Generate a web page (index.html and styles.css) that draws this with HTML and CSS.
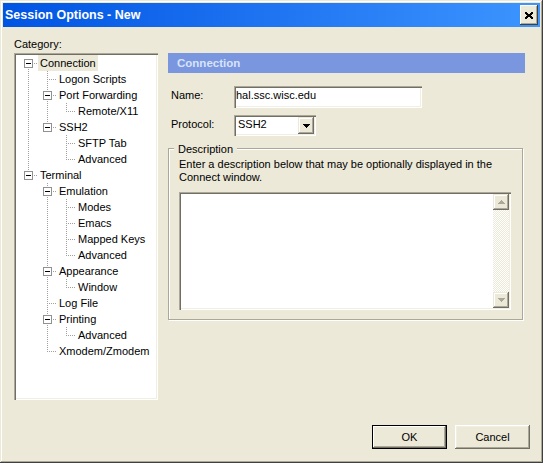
FILE: index.html
```html
<!DOCTYPE html>
<html>
<head>
<meta charset="utf-8">
<link rel="stylesheet" href="styles.css">
</head>
<body>
<div class="window">
  <div class="titlebar">
    <span class="title">Session Options - New</span>
    <span class="close"><svg width="8" height="7" viewBox="0 0 8 7" shape-rendering="crispEdges"><path fill="#000" d="M0 0h2v1H0zM6 0h2v1H6zM0 1h3v1H0zM5 1h3v1H5zM1 2h6v1H1zM2 3h4v1H2zM1 4h6v1H1zM0 5h3v1H0zM5 5h3v1H5zM0 6h2v1H0zM6 6h2v1H6z"/></svg></span>
  </div>
  <div class="content">
    <div class="left">
      <div class="cat-label">Category:</div>
      <div class="tree">
        <div class="row"><span class="g f"><i class="box"></i></span><span class="lbl sel">Connection</span></div>
        <div class="row"><span class="g v"></span><span class="g t"></span><span class="lbl">Logon Scripts</span></div>
        <div class="row"><span class="g v"></span><span class="g t"><i class="box"></i></span><span class="lbl">Port Forwarding</span></div>
        <div class="row"><span class="g v"></span><span class="g v"></span><span class="g l"></span><span class="lbl">Remote/X11</span></div>
        <div class="row"><span class="g v"></span><span class="g l"><i class="box"></i></span><span class="lbl">SSH2</span></div>
        <div class="row"><span class="g v"></span><span class="g n"></span><span class="g t"></span><span class="lbl">SFTP Tab</span></div>
        <div class="row"><span class="g v"></span><span class="g n"></span><span class="g l"></span><span class="lbl">Advanced</span></div>
        <div class="row"><span class="g l"><i class="box"></i></span><span class="lbl">Terminal</span></div>
        <div class="row"><span class="g n"></span><span class="g t"><i class="box"></i></span><span class="lbl">Emulation</span></div>
        <div class="row"><span class="g n"></span><span class="g v"></span><span class="g t"></span><span class="lbl">Modes</span></div>
        <div class="row"><span class="g n"></span><span class="g v"></span><span class="g t"></span><span class="lbl">Emacs</span></div>
        <div class="row"><span class="g n"></span><span class="g v"></span><span class="g t"></span><span class="lbl">Mapped Keys</span></div>
        <div class="row"><span class="g n"></span><span class="g v"></span><span class="g l"></span><span class="lbl">Advanced</span></div>
        <div class="row"><span class="g n"></span><span class="g t"><i class="box"></i></span><span class="lbl">Appearance</span></div>
        <div class="row"><span class="g n"></span><span class="g v"></span><span class="g l"></span><span class="lbl">Window</span></div>
        <div class="row"><span class="g n"></span><span class="g t"></span><span class="lbl">Log File</span></div>
        <div class="row"><span class="g n"></span><span class="g t"><i class="box"></i></span><span class="lbl">Printing</span></div>
        <div class="row"><span class="g n"></span><span class="g v"></span><span class="g l"></span><span class="lbl">Advanced</span></div>
        <div class="row"><span class="g n"></span><span class="g l"></span><span class="lbl">Xmodem/Zmodem</span></div>
      </div>
    </div>
    <div class="right">
      <div class="header">Connection</div>
      <div class="form-row name-row">
        <span class="flabel">Name:</span>
        <div class="field">hal.ssc.wisc.edu</div>
      </div>
      <div class="form-row proto-row">
        <span class="flabel">Protocol:</span>
        <div class="select">
          <span class="sel-text">SSH2</span>
          <span class="drop"><svg width="7" height="4" viewBox="0 0 7 4" shape-rendering="crispEdges"><path fill="#000" d="M0 0h7v1H0zM1 1h5v1H1zM2 2h3v1H2zM3 3h1v1H3z"/></svg></span>
        </div>
      </div>
      <div class="group">
        <div class="legend">Description</div>
        <div class="desc">Enter a description below that may be optionally displayed in the<br>Connect window.</div>
        <div class="memo">
          <div class="vscroll">
            <span class="sbtn"><svg width="7" height="4" viewBox="0 0 7 4" shape-rendering="crispEdges"><path fill="#ACA899" d="M3 0h1v1H3zM2 1h3v1H2zM1 2h5v1H1zM0 3h7v1H0z"/></svg></span>
            <span class="track"></span>
            <span class="sbtn"><svg width="7" height="4" viewBox="0 0 7 4" shape-rendering="crispEdges"><path fill="#ACA899" d="M0 0h7v1H0zM1 1h5v1H1zM2 2h3v1H2zM3 3h1v1H3z"/></svg></span>
          </div>
        </div>
      </div>
    </div>
  </div>
  <div class="footer">
    <button class="btn default">OK</button>
    <button class="btn">Cancel</button>
  </div>
</div>
</body>
</html>
```
FILE: styles.css
```css
* { box-sizing: border-box; }
html, body { margin: 0; padding: 0; }
body {
  width: 543px;
  height: 463px;
  overflow: hidden;
  background: #ECE9D8;
  color: #000;
  font-family: "Liberation Sans", Arial, sans-serif;
  font-size: 11px;
}
.window {
  width: 543px;
  height: 463px;
  padding: 3px;
  background: #ECE9D8;
  display: flex;
  flex-direction: column;
  box-shadow: inset -1px -1px 0 #404040, inset 1px 1px 0 #ECE9D8, inset -2px -2px 0 #ACA899, inset 2px 2px 0 #fff;
}
.titlebar {
  height: 24px;
  flex: none;
  display: flex;
  align-items: center;
  justify-content: space-between;
  padding: 0 2px 0 2px;
  background: linear-gradient(to right, #0054E3, #3D95FF);
}
.title {
  color: #fff;
  font-weight: bold;
  font-size: 12.5px;
}
.close {
  width: 18px;
  height: 20px;
  background: #ECE9D8;
  display: flex;
  align-items: center;
  justify-content: center;
  box-shadow: inset -1px -1px 0 #404040, inset 1px 1px 0 #fff, inset -2px -2px 0 #ACA899;
}
.content {
  display: flex;
  flex: none;
}
.left {
  margin-left: 11px;
  padding-top: 11px;
  width: 144px;
  flex: none;
}
.cat-label {
  height: 13px;
  line-height: 13px;
  margin-bottom: 2px;
}
.tree {
  width: 144px;
  height: 347px;
  background: #fff;
  padding: 2px 0 0 5px;
  box-shadow: inset 1px 1px 0 #ACA899, inset 2px 2px 0 #716F64, inset -1px -1px 0 #fff, inset -2px -2px 0 #F1EFE2;
}
.row {
  display: flex;
  height: 16px;
  line-height: 16px;
  white-space: nowrap;
}
.g {
  display: block;
  width: 19px;
  height: 16px;
  flex: none;
}
.g.v {
  background: repeating-linear-gradient(to bottom, #A0A0A0 0 1px, transparent 1px 2px) 9px 0 / 1px 16px no-repeat;
}
.g.t {
  background:
    repeating-linear-gradient(to right, #A0A0A0 0 1px, transparent 1px 2px) 11px 8px / 8px 1px no-repeat,
    repeating-linear-gradient(to bottom, #A0A0A0 0 1px, transparent 1px 2px) 9px 0 / 1px 16px no-repeat;
}
.g.l {
  background:
    repeating-linear-gradient(to right, #A0A0A0 0 1px, transparent 1px 2px) 11px 8px / 8px 1px no-repeat,
    repeating-linear-gradient(to bottom, #A0A0A0 0 1px, transparent 1px 2px) 9px 0 / 1px 9px no-repeat;
}
.g.f {
  background:
    repeating-linear-gradient(to right, #A0A0A0 0 1px, transparent 1px 2px) 11px 8px / 8px 1px no-repeat,
    repeating-linear-gradient(to bottom, #A0A0A0 0 1px, transparent 1px 2px) 9px 8px / 1px 8px no-repeat;
}
.box {
  display: block;
  width: 9px;
  height: 9px;
  margin: 4px 0 0 5px;
  border: 1px solid #919191;
  background: linear-gradient(#000, #000) 1px 3px / 5px 1px no-repeat, #fff;
}
.lbl {
  padding: 0 2px;
}
.lbl.sel {
  background: #ECE9D8;
}
.right {
  margin-left: 10px;
  width: 357px;
  flex: none;
  padding-top: 26px;
}
.header {
  height: 20px;
  line-height: 20px;
  padding-left: 9px;
  background: #7A96DF;
  color: #D8E2F8;
  font-weight: bold;
  font-size: 11.5px;
}
.form-row {
  display: flex;
  align-items: flex-start;
  padding-left: 3px;
}
.name-row { margin-top: 13px; }
.proto-row { margin-top: 7px; }
.flabel {
  width: 63px;
  flex: none;
  padding-top: 3px;
  line-height: 13px;
}
.field {
  width: 188px;
  height: 22px;
  background: #fff;
  padding: 3px 0 0 2px;
  line-height: 13px;
  box-shadow: inset 1px 1px 0 #ACA899, inset 2px 2px 0 #716F64, inset -1px -1px 0 #fff, inset -2px -2px 0 #F1EFE2;
}
.select {
  width: 82px;
  height: 21px;
  background: #fff;
  display: flex;
  padding: 2px;
  box-shadow: inset 1px 1px 0 #ACA899, inset 2px 2px 0 #716F64, inset -1px -1px 0 #fff, inset -2px -2px 0 #F1EFE2;
}
.sel-text {
  flex: 1;
  padding: 1px 0 0 2px;
  line-height: 13px;
}
.drop {
  width: 16px;
  height: 17px;
  background: #ECE9D8;
  display: flex;
  align-items: center;
  justify-content: center;
  box-shadow: inset -1px -1px 0 #716F64, inset 1px 1px 0 #ECE9D8, inset -2px -2px 0 #ACA899, inset 2px 2px 0 #fff;
}
.group {
  margin-top: 12px;
  width: 355px;
  border: 1px solid #ACA899;
  box-shadow: inset 1px 1px 0 #fff, 1px 1px 0 #fff;
  padding: 0 11px 9px 10px;
}
.legend {
  width: max-content;
  margin: -7px 0 0 -5px;
  padding: 0 4px;
  line-height: 14px;
  background: #ECE9D8;
}
.desc {
  margin-top: 2px;
  line-height: 13px;
}
.memo {
  margin-top: 8px;
  width: 332px;
  height: 118px;
  background: #fff;
  padding: 2px;
  display: flex;
  justify-content: flex-end;
  box-shadow: inset 1px 1px 0 #ACA899, inset 2px 2px 0 #716F64, inset -1px -1px 0 #fff, inset -2px -2px 0 #F1EFE2;
}
.vscroll {
  width: 16px;
  display: flex;
  flex-direction: column;
}
.sbtn {
  width: 16px;
  height: 16px;
  flex: none;
  background: #ECE9D8;
  display: flex;
  align-items: center;
  justify-content: center;
  box-shadow: inset -1px -1px 0 #716F64, inset 1px 1px 0 #ECE9D8, inset -2px -2px 0 #ACA899, inset 2px 2px 0 #fff;
}
.track {
  flex: 1;
  background: repeating-conic-gradient(#fff 0 25%, #ECE9D8 0 50%) 0 0 / 2px 2px;
}
.footer {
  margin-top: auto;
  display: flex;
  justify-content: flex-end;
  gap: 8px;
  padding: 0 10px 11px 0;
}
.btn {
  width: 75px;
  height: 24px;
  border: 0;
  padding: 0;
  margin: 0;
  background: #ECE9D8;
  color: #000;
  font-family: "Liberation Sans", Arial, sans-serif;
  font-size: 11px;
  box-shadow: inset -1px -1px 0 #716F64, inset 1px 1px 0 #fff, inset -2px -2px 0 #ACA899, inset 2px 2px 0 #F1EFE2;
}
.btn.default {
  box-shadow: inset 0 0 0 1px #000, inset -2px -2px 0 #716F64, inset 2px 2px 0 #fff, inset -3px -3px 0 #ACA899;
}
```
